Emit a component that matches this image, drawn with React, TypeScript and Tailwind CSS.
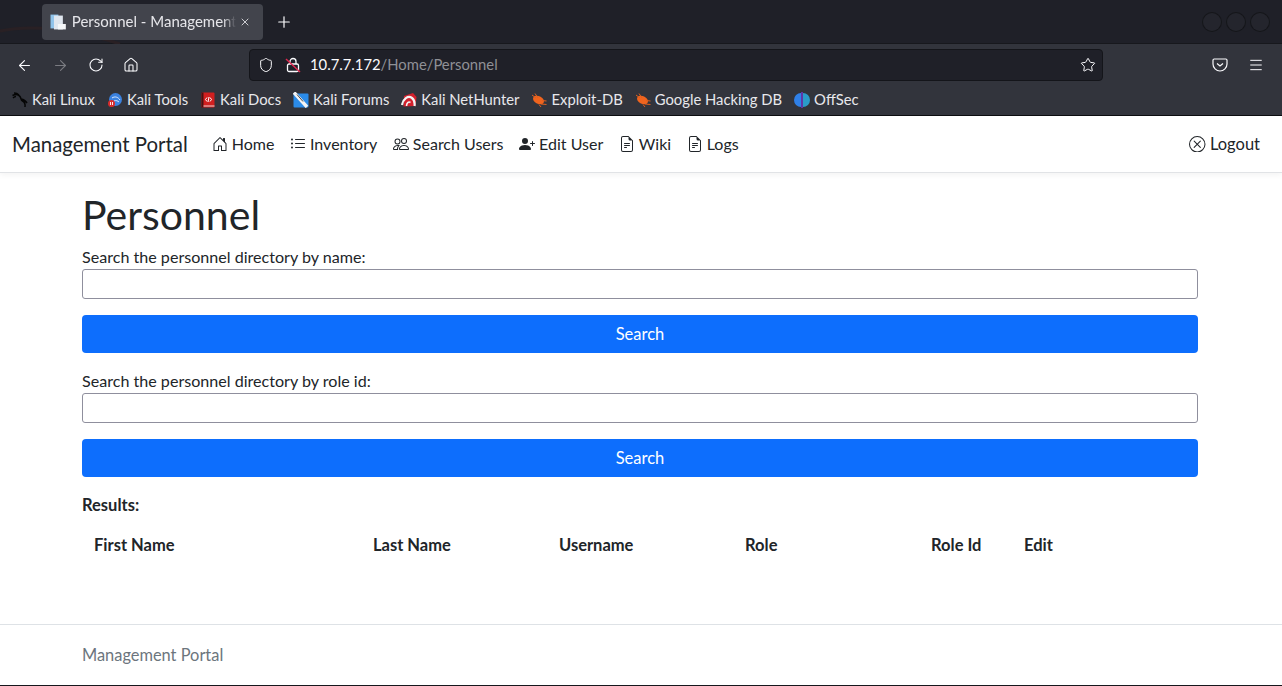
import {
  BsFileEarmarkText,
  BsHouseDoor,
  BsListUl,
  BsPeople,
  BsPersonPlusFill,
  BsXCircle,
} from "react-icons/bs";
import { ArrowLeft, ArrowRight, Home, Menu, Plus, RotateCw, Shield, Star, X } from "lucide-react";

const bookmarks = [
  { label: "Kali Linux", icon: <KaliIcon /> },
  { label: "Kali Tools", icon: <ToolsIcon /> },
  { label: "Kali Docs", icon: <DocsIcon /> },
  { label: "Kali Forums", icon: <ForumsIcon /> },
  { label: "Kali NetHunter", icon: <NetHunterIcon /> },
  { label: "Exploit-DB", icon: <BugIcon /> },
  { label: "Google Hacking DB", icon: <BugIcon /> },
  { label: "OffSec", icon: <OffSecIcon /> },
];

const navItems = [
  { label: "Home", icon: <BsHouseDoor /> },
  { label: "Inventory", icon: <BsListUl /> },
  { label: "Search Users", icon: <BsPeople /> },
  { label: "Edit User", icon: <BsPersonPlusFill /> },
  { label: "Wiki", icon: <BsFileEarmarkText /> },
  { label: "Logs", icon: <BsFileEarmarkText /> },
];

function KaliIcon() {
  return (
    <svg viewBox="0 0 16 16" className="h-4 w-4" fill="none" stroke="#050505" strokeWidth="1.500">
      <path d="M0.500 3.500c3-1.500 6-1 7.500 1 1.500 2 .5 3.500 2.500 4.500 2 1 3 2.500 2.500 6M2 1c2 0 3.500.5 5 2M9 7c2.500.500 4.500 1.500 6 4M1 6c1-1 2-1.500 3-1.500" />
    </svg>
  );
}

function ToolsIcon() {
  return (
    <svg viewBox="0 0 16 16" className="h-4 w-4">
      <circle cx="8.500" cy="7.500" r="6.500" fill="#3b82e0" />
      <path d="M5 6c3-2 6-1 8 2M7 9c2-1 4 0 5 1" stroke="#dbeafe" strokeWidth="1" fill="none" />
      <circle cx="4.500" cy="11.500" r="3.500" fill="#d92c2c" />
      <path d="M3.500 10v3M5.500 10v3" stroke="#fff" strokeWidth="0.900" />
    </svg>
  );
}

function DocsIcon() {
  return (
    <svg viewBox="0 0 16 16" className="h-4 w-4">
      <rect x="1.500" y="0.500" width="13" height="15" rx="1" fill="#d01f1f" />
      <rect x="1.500" y="0.500" width="2" height="15" fill="#4a1010" />
      <rect x="3.500" y="13.500" width="11" height="1" fill="#e8d5d5" />
      <path d="M7 5.500 5.500 7.500 7 9.500M10 5.500l1.500 2L10 9.500M9 5 8 10" stroke="#fff" strokeWidth="1" fill="none" />
    </svg>
  );
}

function ForumsIcon() {
  return (
    <svg viewBox="0 0 16 16" className="h-4 w-4">
      <rect x="0.500" y="1.500" width="15" height="14" rx="1" fill="#2b8be8" />
      <path d="M1 0.500 14 15" stroke="#f5f5f5" strokeWidth="3.400" />
      <path d="M4 2.500l6 7" stroke="#444" strokeWidth="1" />
    </svg>
  );
}

function NetHunterIcon() {
  return (
    <svg viewBox="0 0 16 16" className="h-4 w-4">
      <path d="M3 4 12 1l3.500 4-1 9-12 .500z" fill="#d3202c" />
      <path d="M1 13C2 7 7 3 11 6c2 1.500 3 4 2.500 8" stroke="#f2f2f2" strokeWidth="2.200" fill="none" />
      <path d="M5.500 14c0-3 2-5 4-3.500" stroke="#f2f2f2" strokeWidth="1.600" fill="none" />
    </svg>
  );
}

function BugIcon() {
  return (
    <svg viewBox="0 0 16 16" className="h-4 w-4">
      <ellipse cx="7.500" cy="8" rx="5.800" ry="3.800" transform="rotate(25 7.500 8)" fill="#f0641e" />
      <path d="M1 3l4 3M4 1.500 7 6M10 12l5.500 .5M8 12.500l2 2.500M11 8.500l4.500 .5" stroke="#e0601f" strokeWidth="1" />
    </svg>
  );
}

function OffSecIcon() {
  return (
    <svg viewBox="0 0 16 16" className="h-4 w-4">
      <path d="M7 1a7 7 0 0 0 0 14z" fill="#2f80e8" />
      <path d="M9 1a7 7 0 0 1 0 14z" fill="#2a9bc9" />
      <path d="M8 0v16" stroke="#7c3aed" strokeWidth="1.200" />
    </svg>
  );
}

function TabFavicon() {
  return (
    <svg viewBox="0 0 16 16" className="h-4 w-4">
      <rect x="0.500" y="0.500" width="8" height="14" fill="#8fc3ea" />
      <rect x="4" y="1.500" width="9" height="14" fill="#dfe6ee" />
      <rect x="8" y="10" width="8" height="5.500" fill="#f4f6f8" />
    </svg>
  );
}

function UnsecureLock() {
  return (
    <svg viewBox="0 0 16 16" className="h-4 w-4" fill="none">
      <rect x="2.500" y="7" width="11" height="7.500" rx="1.500" stroke="#fbfbfe" strokeWidth="1.300" />
      <path d="M5 7V4.500a3 3 0 0 1 6 0V7" stroke="#fbfbfe" strokeWidth="1.300" />
      <path d="M1 2l14 13" stroke="#e22850" strokeWidth="1.400" />
    </svg>
  );
}

function PocketIcon() {
  return (
    <svg viewBox="0 0 16 16" className="h-4 w-4" fill="none" stroke="#fbfbfe" strokeWidth="1.200">
      <path d="M2.200 2h11.600c.7 0 1.200.5 1.200 1.200V7a7 7 0 0 1-14 0V3.200C1 2.500 1.500 2 2.200 2z" />
      <path d="m5 6.500 3 2.500 3-2.500" />
    </svg>
  );
}

function BrowserChrome() {
  return (
    <div className="relative shrink-0 bg-[#32343c] text-[#fbfbfe]">
      <div className="relative flex h-11 items-center border-b border-[#17181d] bg-[#1f2028] pl-[42px]">
        <svg viewBox="0 0 130 44" className="absolute left-0 top-0 h-11 w-[130px]" fill="none">
          <path d="M0 31c30-6 70-3 120 13" stroke="#292024" strokeWidth="3" />
        </svg>
        <div className="relative flex h-9 w-[221px] items-center rounded-[4px] bg-[#42444c] pl-[8px] pr-[12px]">
          <TabFavicon />
          <span className="ml-[6px] w-[166px] overflow-hidden whitespace-nowrap text-[15px] text-[#e6e6ea] [mask-image:linear-gradient(to_right,black_92%,transparent)]">
            Personnel - Management Portal
          </span>
          <X className="ml-[3px] h-[12px] w-[12px] shrink-0" strokeWidth={1.5} />
        </div>
        <Plus className="relative ml-3 h-[18px] w-[18px]" strokeWidth={1.6} />
        <div className="ml-auto flex gap-[6px] pr-[13px]">
          <span className="h-[18px] w-[18px] rounded-full bg-[#24252d] ring-1 ring-[#15161a]" />
          <span className="h-[18px] w-[18px] rounded-full bg-[#24252d] ring-1 ring-[#15161a]" />
          <span className="h-[18px] w-[18px] rounded-full bg-[#24252d] ring-1 ring-[#15161a]" />
        </div>
      </div>
      <div className="flex h-[42px] items-center pl-4 pr-[18px]">
        <ArrowLeft className="h-[17px] w-[17px]" strokeWidth={1.5} />
        <ArrowRight className="ml-[19px] h-[17px] w-[17px] text-[#7b7c82]" strokeWidth={1.5} />
        <RotateCw className="ml-[19px] h-4 w-4" strokeWidth={1.6} />
        <Home className="ml-[19px] h-4 w-4" strokeWidth={1.6} />
        <div className="ml-[110px] flex h-8 w-[854px] items-center rounded-[4px] border border-[#14151a] bg-[#1f2028] pl-2 pr-[6px]">
          <Shield className="h-4 w-4" strokeWidth={1.5} />
          <span className="ml-[11px]">
            <UnsecureLock />
          </span>
          <span className="ml-[9px] pb-[2px] text-[14.800px] text-[#fbfbfe]">
            10.7.7.172<span className="text-[#8f9096]">/Home/Personnel</span>
          </span>
          <Star className="ml-auto h-4 w-4" strokeWidth={1.5} />
        </div>
        <div className="ml-auto flex items-center gap-5">
          <PocketIcon />
          <Menu className="h-4 w-4" strokeWidth={1.5} />
        </div>
      </div>
      <div className="flex h-[30px] items-center gap-[12px] border-b border-[#0c0d10] pl-3 pb-[2px]">
        {bookmarks.map((b) => (
          <div key={b.label} className="flex items-center gap-[4px] text-[14.800px] text-[#e8e8ec]">
            {b.icon}
            <span>{b.label}</span>
          </div>
        ))}
      </div>
    </div>
  );
}

function Field({ label }: { label: string }) {
  return (
    <div className="mb-[16px]">
      <label className="block h-6 text-[16.100px] leading-6">{label}</label>
      <input className="block h-[30px] w-full rounded-[3px] border border-[#8f8f9d] bg-white" />
      <button className="mt-4 block h-[38px] w-full rounded-[4px] bg-[#0d6efd] text-[16.500px] text-white">Search</button>
    </div>
  );
}

export default function App() {
  return (
    <div className="flex h-[686px] w-[1282px] flex-col overflow-hidden bg-white font-['Lato',sans-serif] text-[16px] text-[#212529]">
      <BrowserChrome />
      <nav className="flex h-[57px] shrink-0 items-center border-b border-[#e1e3e6] pl-3 pr-[22px] shadow-[0_2px_6px_rgba(0,0,0,0.05)]">
        <span className="mr-[24px] text-[20.400px]">Management Portal</span>
        <div className="flex items-center gap-[15.600px]">
          {navItems.map((n) => (
            <a key={n.label} className="flex items-center gap-1">
              {n.icon}
              {n.label}
            </a>
          ))}
        </div>
        <a className="ml-auto flex items-center gap-1 text-[16.500px] text-[#212529]">
          <BsXCircle />
          Logout
        </a>
      </nav>
      <main className="flex-1 px-[82px] pr-[84px] pt-4">
        <h1 className="mb-[8px] h-12 text-[41px] leading-[51px]">Personnel</h1>
        <Field label="Search the personnel directory by name:" />
        <Field label="Search the personnel directory by role id:" />
        <p className="mt-[16px] h-6 text-[16.500px] font-bold leading-6">Results:</p>
        <div className="mt-2 grid grid-cols-[279px_186px_186px_186px_93px_1fr] py-2 pl-3 text-[16.500px] font-bold">
          <span>First Name</span>
          <span>Last Name</span>
          <span>Username</span>
          <span>Role</span>
          <span>Role Id</span>
          <span>Edit</span>
        </div>
      </main>
      <footer className="flex h-[61px] shrink-0 items-center border-t border-[#dee2e6] pl-[82px] text-[16.400px] text-[#6c757d]">
        Management Portal
      </footer>
      <div className="h-px shrink-0 bg-[#16171c]" />
    </div>
  );
}
